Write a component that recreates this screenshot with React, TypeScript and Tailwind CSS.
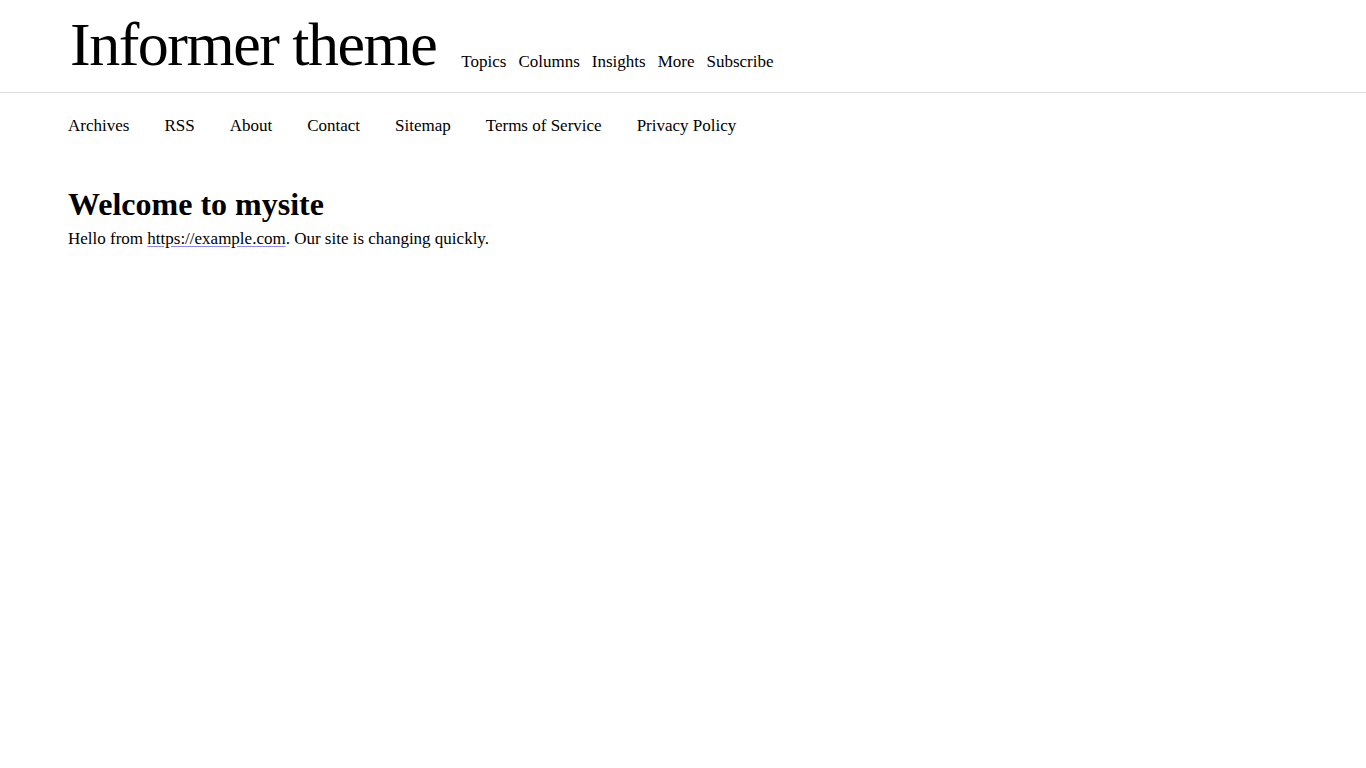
export default function App() {
  const topNav = ["Topics", "Columns", "Insights", "More", "Subscribe"];
  const pages = ["Archives", "RSS", "About", "Contact", "Sitemap", "Terms of Service", "Privacy Policy"];

  return (
    <div className="min-h-screen bg-white text-black font-['Liberation_Serif',serif]">
      <header className="border-b border-[#dddddd]">
        <div className="flex items-end px-[68px] pt-[14px] pb-[18px]">
          <a href="/" className="ml-[2px] text-[62px] leading-[60px] tracking-[-1.5px] mr-[25px]">
            Informer theme
          </a>
          <nav className="flex gap-[12px] text-[17px] leading-[20px] pb-[2px]">
            {topNav.map((item) => (
              <a key={item} href="#">
                {item}
              </a>
            ))}
          </nav>
        </div>
      </header>

      <nav className="flex gap-[35px] px-[68px] pt-[23px] text-[17px] leading-[20px]">
        {pages.map((p) => (
          <a key={p} href="#">
            {p}
          </a>
        ))}
      </nav>

      <main className="px-[68px] pt-[50px]">
        <h1 className="text-[32px] leading-[36px] font-bold">Welcome to mysite</h1>
        <p className="text-[17px] leading-[22px] mt-[6px]">
          Hello from{" "}
          <a href="https://example.com" className="underline decoration-[#8c8cf0] underline-offset-2">
            https://example.com
          </a>
          . Our site is changing quickly.
        </p>
      </main>
    </div>
  );
}
